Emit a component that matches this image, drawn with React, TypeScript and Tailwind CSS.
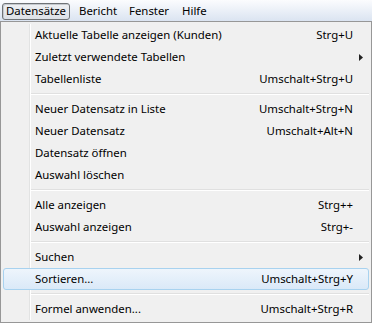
import React from "react";

type Item =
  | { kind: "item"; label: string; shortcut?: string; submenu?: boolean; hot?: boolean }
  | { kind: "sep" };

const items: Item[] = [
  { kind: "item", label: "Aktuelle Tabelle anzeigen (Kunden)", shortcut: "Strg+U" },
  { kind: "item", label: "Zuletzt verwendete Tabellen", submenu: true },
  { kind: "item", label: "Tabellenliste", shortcut: "Umschalt+Strg+U" },
  { kind: "sep" },
  { kind: "item", label: "Neuer Datensatz in Liste", shortcut: "Umschalt+Strg+N" },
  { kind: "item", label: "Neuer Datensatz", shortcut: "Umschalt+Alt+N" },
  { kind: "item", label: "Datensatz öffnen" },
  { kind: "item", label: "Auswahl löschen" },
  { kind: "sep" },
  { kind: "item", label: "Alle anzeigen", shortcut: "Strg++" },
  { kind: "item", label: "Auswahl anzeigen", shortcut: "Strg+-" },
  { kind: "sep" },
  { kind: "item", label: "Suchen", submenu: true },
  { kind: "item", label: "Sortieren...", shortcut: "Umschalt+Strg+Y", hot: true },
  { kind: "sep" },
  { kind: "item", label: "Formel anwenden...", shortcut: "Umschalt+Strg+R" },
];

function Arrow() {
  return (
    <svg width="4" height="7" viewBox="0 0 4 7" className="block">
      <path d="M0 0 L4 3.5 L0 7 Z" fill="#222" />
    </svg>
  );
}

export default function App() {
  return (
    <div
      className="w-[372px] h-[323px] overflow-hidden bg-[#f0f0f0] text-[11.4px] text-black leading-none"
      style={{ fontFamily: '"Noto Sans", "Open Sans", sans-serif' }}
    >
      {/* Menu bar */}
      <div className="h-[21px] flex items-center pl-[2px] bg-gradient-to-b from-[#fbfcfe] to-[#dbe4f1]">
        <div className="w-[68px] h-[17px] mt-[1px] flex items-center justify-center border border-[#6f7377] rounded-[3px] bg-gradient-to-b from-[#eef0f3] to-[#dde1e7] shadow-[inset_1px_1px_0_#c5c9ce]">
          Datensätze
        </div>
        <div className="w-[51px] h-[17px] flex items-center pl-[9px]">Bericht</div>
        <div className="w-[54px] h-[17px] flex items-center pl-[8px]">Fenster</div>
        <div className="h-[17px] flex items-center pl-[7px]">Hilfe</div>
      </div>

      {/* Dropdown */}
      <div className="h-[302px] border border-[#979797] px-[2px] pt-[2px] pb-[2px] bg-[#f0f0f0]">
        {items.map((it, i) =>
          it.kind === "sep" ? (
            <div key={i} className="h-[8px] flex">
              <div className="w-[27px] shrink-0 border-r border-[#e2e3e3]" />
              <div className="w-[1px] bg-white" />
              <div className="flex-1 flex flex-col pt-[3px]">
                <div className="h-[1px] bg-[#e0e0e0]" />
                <div className="h-[1px] bg-white" />
              </div>
            </div>
          ) : (
            <div
              key={i}
              className={
                it.hot
                  ? "h-[22px] flex items-center rounded-[3px] border border-[#a8d2ef] bg-gradient-to-b from-[#eef5fc] to-[#dae9f8]"
                  : "h-[22px] flex items-center"
              }
            >
              {it.hot ? (
                <div className="w-[28px] shrink-0 self-stretch" />
              ) : (
                <>
                  <div className="w-[27px] shrink-0 self-stretch border-r border-[#e2e3e3]" />
                  <div className="w-[1px] self-stretch bg-white" />
                </>
              )}
              <div className={it.hot ? "flex-1 pl-[3px] pb-[1px]" : "flex-1 pl-[4px] pb-[1px]"}>
                {it.label}
              </div>
              {it.shortcut && <div className="pb-[1px] whitespace-nowrap">{it.shortcut}</div>}
              <div className={it.hot ? "w-[15px] shrink-0 flex items-center justify-center" : "w-[16px] shrink-0 flex items-center justify-center"}>
                {it.submenu && <Arrow />}
              </div>
            </div>
          )
        )}
      </div>
    </div>
  );
}
